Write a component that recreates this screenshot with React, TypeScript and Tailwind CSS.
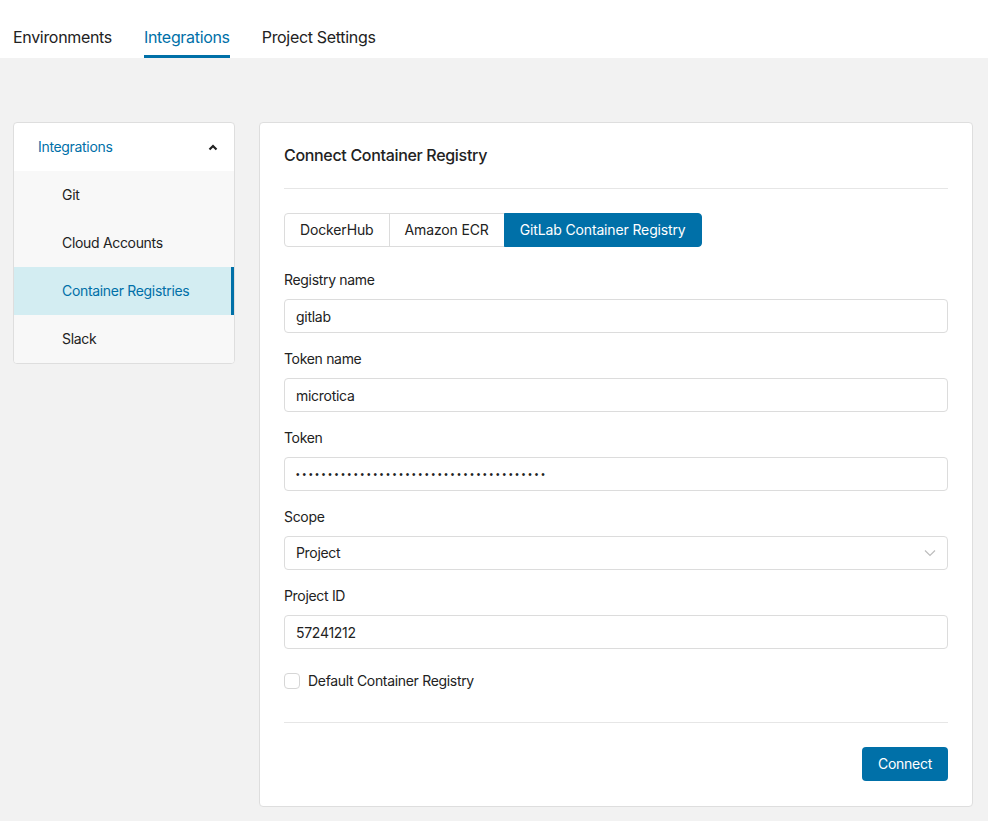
import { useState } from "react"

const tabs = ["Environments", "Integrations", "Project Settings"]
const menu = ["Git", "Cloud Accounts", "Container Registries", "Slack"]
const registries = ["DockerHub", "Amazon ECR", "GitLab Container Registry"]

function Field({ label, children }: { label: string; children: React.ReactNode }) {
  return (
    <div className="mb-4">
      <label className="block text-sm leading-5 text-[#222] mb-[9px]">{label}</label>
      {children}
    </div>
  )
}

function TextInput({ value }: { value: string }) {
  return (
    <input
      readOnly
      type="text"
      value={value}
      className="w-full h-[34px] px-[11px] rounded-[4px] border border-[#dcdcdc] bg-white text-sm text-[#222] outline-none tracking-[-0.02em]"
    />
  )
}

export default function App() {
  const [active, setActive] = useState(2)

  return (
    <div className="min-h-screen bg-[#f2f2f2] font-['Inter',sans-serif] tracking-[-0.02em] text-[#222]">
      {/* Top tabs */}
      <nav className="bg-white h-[58px] flex items-end gap-8 px-[13px]">
        {tabs.map((t) => (
          <div
            key={t}
            className={
              t === "Integrations"
                ? "pb-[6px] text-base text-[#0070a8] border-b-[3px] border-[#0070a8]"
                : "pb-[9px] text-base text-[#222]"
            }
          >
            {t}
          </div>
        ))}
      </nav>

      <main className="flex gap-6 pl-[13px] pr-[15px] pt-16 pb-4">
        {/* Sidebar */}
        <aside className="w-[222px] self-start bg-white rounded-[4px] border border-[#dedede] overflow-hidden">
          <div className="h-[48px] flex items-center justify-between pl-6 pr-4 text-sm text-[#0070a8]">
            <span>Integrations</span>
            <svg width="10" height="7" viewBox="0 0 10 7">
              <path d="M1.5 5.5 L5 2 L8.5 5.5" fill="none" stroke="#222" strokeWidth="2.2" />
            </svg>
          </div>
          {menu.map((m, i) => (
            <div
              key={m}
              className={
                i === 2
                  ? "h-[48px] flex items-center pl-12 text-sm text-[#0070a8] bg-[#d3edf2] border-r-[3px] border-[#0070a8]"
                  : "h-[48px] flex items-center pl-12 text-sm text-[#222] bg-[#f8f8f8]"
              }
            >
              {m}
            </div>
          ))}
        </aside>

        {/* Main card */}
        <section className="flex-1 bg-white rounded-[4px] border border-[#dedede] px-6 pt-6 pb-[25px]">
          <h2 className="text-base font-medium leading-[18px] mb-[24px] -mt-px">Connect Container Registry</h2>
          <div className="border-t border-[#e6e6e6] mb-6" />

          <div className="flex mb-[23px]">
            {registries.map((r, i) => (
              <button
                key={r}
                onClick={() => setActive(i)}
                className={
                  (i === active
                    ? "bg-[#0070a8] text-white border-[#0070a8] "
                    : "bg-white text-[#222] border-[#dcdcdc] ") +
                  "h-[34px] px-[15px] text-sm border tracking-[-0.01em] " +
                  (i === 0 ? "rounded-l-[4px] " : "-ml-px ") +
                  (i === registries.length - 1 ? "rounded-r-[4px]" : "")
                }
              >
                {r}
              </button>
            ))}
          </div>

          <Field label="Registry name">
            <TextInput value="gitlab" />
          </Field>
          <Field label="Token name">
            <TextInput value="microtica" />
          </Field>
          <Field label="Token">
            <div className="w-full h-[34px] px-[11px] rounded-[4px] border border-[#dcdcdc] bg-white flex items-center">
              <span className="font-['Liberation_Sans',sans-serif] text-[10px] tracking-[2.95px] text-[#222]">
                {"•".repeat(39)}
              </span>
            </div>
          </Field>
          <Field label="Scope">
            <div className="w-full h-[34px] px-[11px] rounded-[4px] border border-[#dcdcdc] bg-white text-sm flex items-center justify-between">
              <span>Project</span>
              <svg width="12" height="8" viewBox="0 0 12 8">
                <path d="M1 1.5 L6 6.5 L11 1.5" fill="none" stroke="#bdbdbd" strokeWidth="1.2" />
              </svg>
            </div>
          </Field>
          <Field label="Project ID">
            <TextInput value="57241212" />
          </Field>

          <label className="flex items-center gap-2 text-sm mt-[22px]">
            <span className="w-4 h-4 rounded-[4px] border border-[#d6d6d6] bg-white" />
            Default Container Registry
          </label>

          <div className="border-t border-[#e6e6e6] mt-[31px] mb-6" />

          <div className="flex justify-end">
            <button className="h-[34px] px-4 rounded-[4px] bg-[#0070a8] text-white text-sm tracking-[-0.02em]">Connect</button>
          </div>
        </section>
      </main>
    </div>
  )
}
